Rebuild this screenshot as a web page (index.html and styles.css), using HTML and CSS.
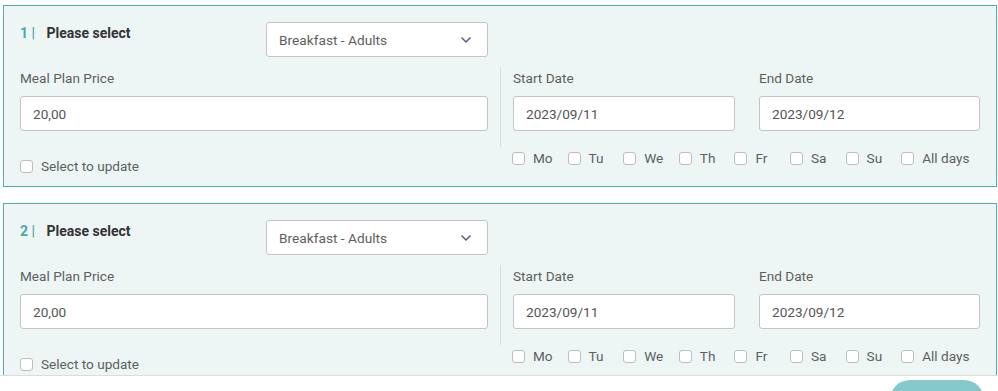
FILE: index.html
```html
<!DOCTYPE html>
<html>
<head>
  <link rel="stylesheet" href="styles.css">
</head>
<body>
  <div class="plans">
    <div class="plan">
      <div class="plan-head">
        <div class="plan-title"><span class="plan-num">1 |</span> Please select</div>
        <div class="select-box">
          <span>Breakfast - Adults</span>
          <svg width="12" height="8" viewBox="0 0 12 8"><path d="M1.5 1.5 L6 6 L10.5 1.5" fill="none" stroke="#5b5b78" stroke-width="1.5"/></svg>
        </div>
      </div>
      <div class="plan-body">
        <div class="price-col">
          <label class="field-label">Meal Plan Price</label>
          <div class="text-input">20,00</div>
          <div class="check update-check"><span class="box"></span>Select to update</div>
        </div>
        <div class="date-col">
          <div class="dates">
            <div class="date-field">
              <label class="field-label">Start Date</label>
              <div class="text-input">2023/09/11</div>
            </div>
            <div class="date-field">
              <label class="field-label">End Date</label>
              <div class="text-input">2023/09/12</div>
            </div>
          </div>
          <div class="days">
            <div class="check"><span class="box"></span>Mo</div>
            <div class="check"><span class="box"></span>Tu</div>
            <div class="check"><span class="box"></span>We</div>
            <div class="check"><span class="box"></span>Th</div>
            <div class="check"><span class="box"></span>Fr</div>
            <div class="check"><span class="box"></span>Sa</div>
            <div class="check"><span class="box"></span>Su</div>
            <div class="check"><span class="box"></span>All days</div>
          </div>
        </div>
      </div>
    </div>

    <div class="plan">
      <div class="plan-head">
        <div class="plan-title"><span class="plan-num">2 |</span> Please select</div>
        <div class="select-box">
          <span>Breakfast - Adults</span>
          <svg width="12" height="8" viewBox="0 0 12 8"><path d="M1.5 1.5 L6 6 L10.5 1.5" fill="none" stroke="#5b5b78" stroke-width="1.5"/></svg>
        </div>
      </div>
      <div class="plan-body">
        <div class="price-col">
          <label class="field-label">Meal Plan Price</label>
          <div class="text-input">20,00</div>
          <div class="check update-check"><span class="box"></span>Select to update</div>
        </div>
        <div class="date-col">
          <div class="dates">
            <div class="date-field">
              <label class="field-label">Start Date</label>
              <div class="text-input">2023/09/11</div>
            </div>
            <div class="date-field">
              <label class="field-label">End Date</label>
              <div class="text-input">2023/09/12</div>
            </div>
          </div>
          <div class="days">
            <div class="check"><span class="box"></span>Mo</div>
            <div class="check"><span class="box"></span>Tu</div>
            <div class="check"><span class="box"></span>We</div>
            <div class="check"><span class="box"></span>Th</div>
            <div class="check"><span class="box"></span>Fr</div>
            <div class="check"><span class="box"></span>Sa</div>
            <div class="check"><span class="box"></span>Su</div>
            <div class="check"><span class="box"></span>All days</div>
          </div>
        </div>
      </div>
    </div>
  </div>

  <div class="footer-bar">
    <div class="save-btn"></div>
  </div>
</body>
</html>
```

FILE: styles.css
```css
body {
  margin: 0;
  font-family: Roboto, "Liberation Sans", sans-serif;
  font-size: 13.6px;
  color: #5e5e5e;
  background: #fff;
}

.plans {
  padding: 5px 1px 0 3px;
}

.plan {
  width: 994px;
  box-sizing: border-box;
  background-color: #edf6f5;
  border: 1px solid #4ab2b0;
  padding: 16px 15px 10px 16px;
  margin-bottom: 16px;
}

.plan-head {
  display: flex;
  align-items: flex-start;
}

.plan-title {
  width: 246px;
  line-height: 22px;
  font-size: 14px;
  font-weight: bold;
  color: #333;
}

.plan-num {
  color: #4aa9ab;
  margin-right: 8px;
}

.select-box {
  width: 222px;
  height: 35px;
  box-sizing: border-box;
  display: flex;
  align-items: center;
  justify-content: space-between;
  padding: 0 15px 0 12px;
  background: #fff;
  border: 1px solid #c4c4c4;
  border-radius: 3px;
  font-size: 13.7px;
  color: #5e5e5e;
}

.plan-body {
  display: grid;
  grid-template-columns: 468px 1fr;
  column-gap: 12px;
  margin-top: 10px;
}

.field-label {
  display: block;
  line-height: 22px;
  color: #5e5e5e;
}

.text-input {
  height: 35px;
  box-sizing: border-box;
  margin-top: 7px;
  padding: 0 12px;
  display: flex;
  align-items: center;
  background: #fff;
  border: 1px solid #c4c4c4;
  border-radius: 3px;
  color: #555;
}

.check {
  display: flex;
  align-items: center;
  line-height: 20px;
  color: #5e5e5e;
}

.box {
  width: 13px;
  height: 13px;
  box-sizing: border-box;
  border: 1px solid #bdbdbd;
  border-radius: 3px;
  background: #fff;
  margin-right: 8px;
}

.update-check {
  margin-top: 25px;
}

.dates {
  display: grid;
  grid-template-columns: 222px 221px;
  column-gap: 24px;
  border-left: 1px solid #d8dede;
  padding: 0 0 16px 12px;
}

.days {
  display: grid;
  grid-template-columns: repeat(7, 55.6px) auto;
  padding-left: 12px;
  margin-top: 1px;
}

.footer-bar {
  position: fixed;
  left: 0;
  right: 0;
  bottom: 0;
  height: 15px;
  background: #fff;
  border-top: 1px solid #dcdcdc;
}

.save-btn {
  position: absolute;
  left: 890px;
  top: 4px;
  width: 94px;
  height: 40px;
  border-radius: 20px;
  background-color: #86c9cc;
}
```
